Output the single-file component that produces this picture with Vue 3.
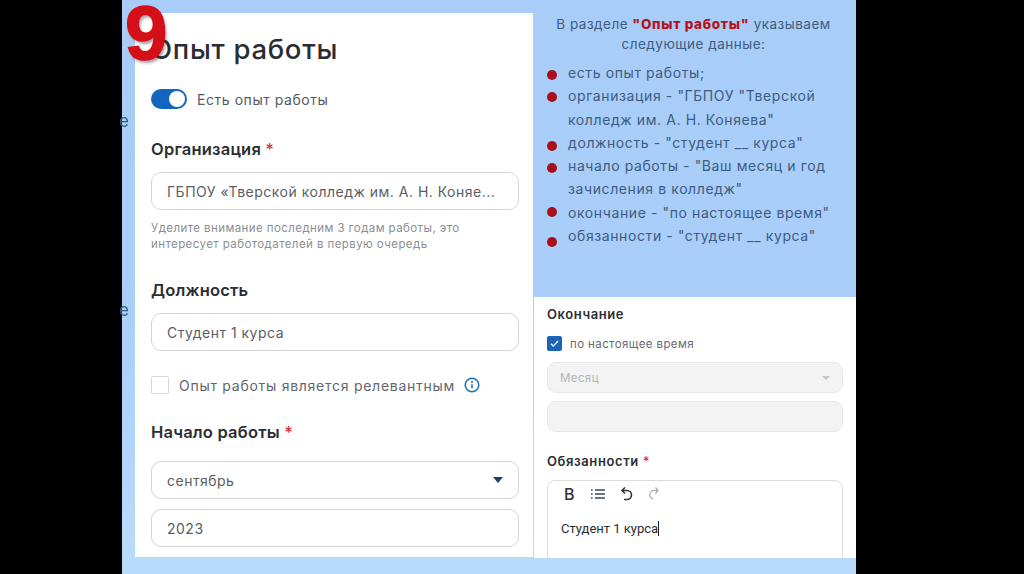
<script setup>
const points = [
  { id: 1, html: 'есть опыт работы;', dot: 9 },
  { id: 2, html: 'организация - "ГБПОУ "Тверской колледж им. А. Н. Коняева"', dot: 8 },
  { id: 3, html: 'должность - "студент __ курса"', dot: 10 },
  { id: 4, html: 'начало работы - "Ваш месяц и год зачисления в колледж"', dot: 9 },
  { id: 5, html: 'окончание - "по настоящее время"', dot: 6 },
  { id: 6, html: 'обязанности - "студент __ курса"', dot: 13 }
]
</script>

<template>
  <div class="page">
    <div class="slide">
      <span class="stray stray-one">е</span>
      <span class="stray stray-two">е</span>
      <span class="number">9</span>

      <section class="card-left">
        <h1 class="title">Опыт работы</h1>

        <div class="switch-row">
          <span class="switch"><i></i></span>
          <span>Есть опыт работы</span>
        </div>

        <h2 class="label label-org">Организация <b>*</b></h2>
        <div class="input">ГБПОУ «Тверской колледж им. А. Н. Коняе...</div>
        <p class="hint">Уделите внимание последним 3 годам работы, это интересует работодателей в первую очередь</p>

        <h2 class="label label-post">Должность</h2>
        <div class="input">Студент 1 курса</div>

        <div class="check-row">
          <span class="box"></span>
          <span>Опыт работы является релевантным</span>
          <svg class="info" width="16" height="16" viewBox="0 0 16 16" fill="none">
            <circle cx="8" cy="8" r="6.8" stroke="#1f6fb5" stroke-width="1.5" />
            <path d="M8 7.2v4" stroke="#1f6fb5" stroke-width="1.6" />
            <circle cx="8" cy="4.9" r="1" fill="#1f6fb5" />
          </svg>
        </div>

        <h2 class="label label-start">Начало работы <b>*</b></h2>
        <div class="input select">
          <span>сентябрь</span>
          <i class="arrow"></i>
        </div>
        <div class="input year">2023</div>
      </section>

      <div class="side">
        <div class="notes">
          <p class="intro">В разделе <strong>"Опыт работы"</strong> указываем следующие данные:</p>
          <ul class="points">
            <li v-for="item in points" :key="item.id">
              <i class="dot" :style="{ top: item.dot + 'px' }"></i>
              {{ item.html }}
            </li>
          </ul>
        </div>

        <section class="card-right">
          <h3 class="small-label">Окончание</h3>
          <div class="now-row">
            <span class="tick">
              <svg width="15" height="15" viewBox="0 0 15 15" fill="none">
                <path d="M4 7.8l2.3 2.3L11 5" stroke="#fff" stroke-width="1.4" />
              </svg>
            </span>
            <span>по настоящее время</span>
          </div>
          <div class="field month">
            <span>Месяц</span>
            <i class="arrow-off"></i>
          </div>
          <div class="field"></div>

          <h3 class="small-label duties">Обязанности <b>*</b></h3>
          <div class="editor">
            <div class="tools">
              <span class="bold">B</span>
              <svg width="16" height="14" viewBox="0 0 16 14" fill="none" stroke="#3c4a5a" stroke-width="1.6">
                <path d="M5 3h10M5 7h10M5 11h10" />
                <path d="M1 3h2M1 7h2M1 11h2" stroke-dasharray="1.6 .6" />
              </svg>
              <svg width="14" height="16" viewBox="0 0 14 16" fill="none" stroke="#333" stroke-width="1.6">
                <path d="M3 4.5h5a4 4 0 0 1 0 9H5" />
                <path d="M6 1.5L3 4.5l3 3" />
              </svg>
              <svg class="redo" width="14" height="16" viewBox="0 0 14 16" fill="none" stroke="#a8a8a8" stroke-width="1.2">
                <path d="M11 4.5H7.5a4 4 0 0 0-1 8.5" />
                <path d="M8.5 1.5l2.5 3-2.5 3" />
              </svg>
            </div>
            <p class="typed">Студент 1 курса<span class="caret"></span></p>
          </div>
        </section>
      </div>
    </div>
  </div>
</template>

<style>
html,
body {
  margin: 0;
  background: #000;
}
</style>

<style scoped>
.page {
  width: 1024px;
  height: 574px;
  background: #000;
  overflow: hidden;
  font-family: Inter, "Noto Sans", sans-serif;
}
.slide {
  position: relative;
  width: 734px;
  height: 574px;
  margin-left: 122px;
  display: flex;
  gap: 1px;
  padding-left: 13px;
  box-sizing: border-box;
  background: linear-gradient(180deg, #a8cdf8 0%, #a9cef9 50%, #b7dcfb 100%);
  filter: blur(0.5px);
}
.stray {
  position: absolute;
  left: -3px;
  color: #3a5a80;
  font-size: 17px;
}
.stray-one { top: 111px; }
.stray-two { top: 300px; }
.number {
  position: absolute;
  left: 3px;
  top: -12px;
  z-index: 2;
  font-family: "Liberation Sans", sans-serif;
  font-size: 76px;
  line-height: 90px;
  font-weight: 700;
  color: #d40f17;
  -webkit-text-stroke: 1.5px #d40f17;
  text-shadow: 2px 3px 3px rgba(70, 40, 60, 0.45);
}
.card-left {
  width: 398px;
  height: 544px;
  margin-top: 13px;
  padding: 21px 14px 0 16px;
  box-sizing: border-box;
  background: #fff;
  flex-shrink: 0;
}
.title {
  margin: 0;
  font-size: 27.5px;
  line-height: 30px;
  font-weight: 500;
  color: #2a2d33;
  letter-spacing: 0.7px;
}
.switch-row {
  display: flex;
  align-items: center;
  gap: 10px;
  margin-top: 25px;
  font-size: 14px;
  letter-spacing: 0.55px;
  color: #555a60;
}
.switch {
  display: block;
  width: 36px;
  height: 20px;
  border-radius: 10px;
  background: #1565c0;
  position: relative;
}
.switch i {
  position: absolute;
  right: 2px;
  top: 2px;
  width: 16px;
  height: 16px;
  border-radius: 50%;
  background: #fff;
}
.label {
  margin: 0;
  font-size: 16.5px;
  line-height: 20px;
  font-weight: 600;
  letter-spacing: 0.2px;
  color: #2b2e33;
}
.label b {
  color: #d9303c;
  font-weight: 500;
}
.label-org { margin-top: 30px; }
.label-post { margin-top: 28px; }
.label-start { margin-top: 28px; }
.input {
  height: 38px;
  margin-top: 13px;
  padding: 0 15px;
  display: flex;
  align-items: center;
  box-sizing: border-box;
  border: 1.5px solid #d4d6d9;
  border-radius: 10px;
  font-size: 14px;
  letter-spacing: 0.5px;
  color: #5a5e63;
  white-space: nowrap;
  overflow: hidden;
}
.select {
  justify-content: space-between;
  margin-top: 19px;
}
.year { margin-top: 10px; }
.arrow {
  border-left: 5px solid transparent;
  border-right: 5px solid transparent;
  border-top: 6px solid #1d3f6e;
}
.hint {
  margin: 11px 0 0;
  padding-right: 30px;
  font-size: 11.5px;
  line-height: 15.5px;
  letter-spacing: 0.42px;
  color: #8b8f94;
}
.check-row {
  display: flex;
  align-items: center;
  margin-top: 25px;
  font-size: 14px;
  letter-spacing: 0.73px;
  color: #63676c;
}
.box {
  width: 18px;
  height: 18px;
  margin-right: 10px;
  border: 1.5px solid #d6d7da;
  border-radius: 2px;
  box-sizing: border-box;
}
.info { margin-left: 9px; }
.side {
  flex: 1;
  display: flex;
  flex-direction: column;
}
.notes {
  height: 297px;
  padding: 14px 16px 0 13px;
  box-sizing: border-box;
  color: #3f5b80;
}
.intro {
  margin: 0;
  padding: 0 4px;
  text-align: center;
  font-size: 13.5px;
  line-height: 20px;
  letter-spacing: 0.5px;
}
.intro strong {
  color: #b5111a;
  font-weight: 800;
  letter-spacing: 0.7px;
}
.points {
  list-style: none;
  margin: 7px 0 0;
  padding: 0;
  font-size: 14px;
  line-height: 23.3px;
  letter-spacing: 0.6px;
}
.points li {
  position: relative;
  padding-left: 21px;
}
.dot {
  position: absolute;
  left: 0;
  width: 10px;
  height: 10px;
  border-radius: 50%;
  background: #a80f18;
}
.card-right {
  height: 261px;
  padding: 8px 13px 0 13px;
  box-sizing: border-box;
  background: #fff;
  overflow: hidden;
}
.small-label {
  margin: 0;
  font-size: 13px;
  line-height: 18px;
  font-weight: 600;
  letter-spacing: 0.6px;
  color: #2b2e33;
}
.small-label b {
  color: #d9303c;
  font-weight: 500;
}
.now-row {
  display: flex;
  align-items: center;
  gap: 8px;
  margin-top: 13px;
  font-size: 11.5px;
  letter-spacing: 0.4px;
  color: #666a6f;
}
.tick {
  display: block;
  width: 15px;
  height: 15px;
  border-radius: 2px;
  background: #1b63b8;
}
.tick svg { display: block; }
.field {
  height: 31px;
  margin-top: 8px;
  padding: 0 12px;
  display: flex;
  align-items: center;
  justify-content: space-between;
  box-sizing: border-box;
  border: 1px solid #e8e8e8;
  border-radius: 9px;
  background: #f3f3f3;
  font-size: 11.5px;
  letter-spacing: 0.4px;
  color: #b3b3b3;
}
.month { margin-top: 11px; }
.arrow-off {
  border-left: 4px solid transparent;
  border-right: 4px solid transparent;
  border-top: 4px solid #c5c5c5;
}
.duties { margin-top: 20px; }
.editor {
  height: 120px;
  margin-top: 10px;
  padding: 0 13px;
  box-sizing: border-box;
  border: 1px solid #dcdcdc;
  border-radius: 8px;
}
.tools {
  display: flex;
  align-items: center;
  gap: 13px;
  height: 26px;
  padding-left: 3px;
}
.bold {
  width: 13px;
  font-size: 16px;
  font-weight: 500;
  color: #333;
}
.redo { margin-left: 1px; }
.typed {
  margin: 13px 0 0;
  font-family: Roboto, sans-serif;
  font-size: 13px;
  line-height: 18px;
  color: #2c2c2c;
}
.caret {
  display: inline-block;
  width: 1px;
  height: 15px;
  background: #222;
  vertical-align: -3px;
}
</style>
